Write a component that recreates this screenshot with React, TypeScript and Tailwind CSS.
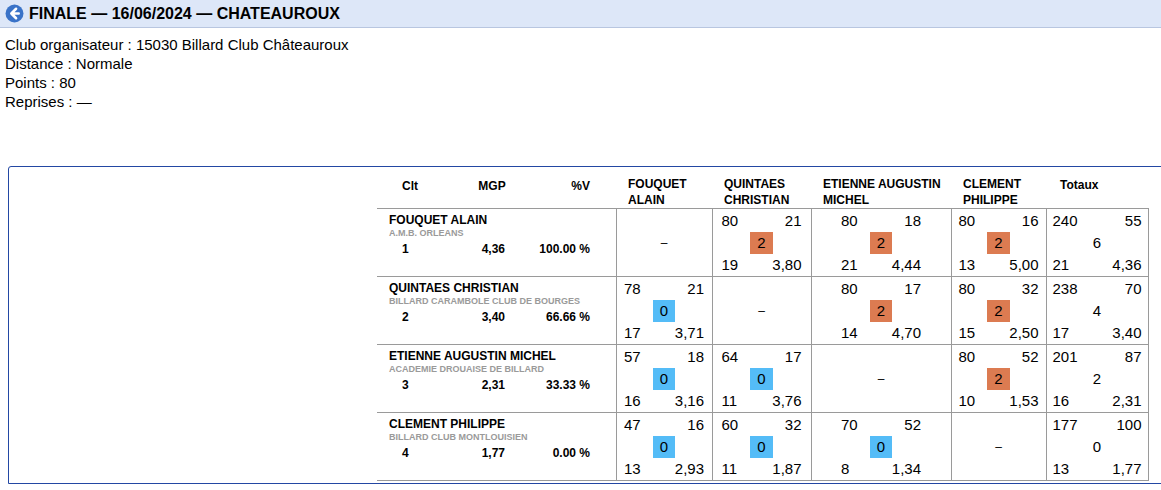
import React from "react";

type Cell = null | { p: number; r: number; m: number; s: number; mo: string; win: boolean };

const players = [
  { name: "FOUQUET ALAIN", club: "A.M.B. ORLEANS", clt: 1, mgp: "4,36", pv: "100.00 %", tot: [240, 55, 6, 21, "4,36"] },
  { name: "QUINTAES CHRISTIAN", club: "BILLARD CARAMBOLE CLUB DE BOURGES", clt: 2, mgp: "3,40", pv: "66.66 %", tot: [238, 70, 4, 17, "3,40"] },
  { name: "ETIENNE AUGUSTIN MICHEL", club: "ACADEMIE DROUAISE DE BILLARD", clt: 3, mgp: "2,31", pv: "33.33 %", tot: [201, 87, 2, 16, "2,31"] },
  { name: "CLEMENT PHILIPPE", club: "BILLARD CLUB MONTLOUISIEN", clt: 4, mgp: "1,77", pv: "0.00 %", tot: [177, 100, 0, 13, "1,77"] },
];

const W = (p: number, r: number, s: number, mo: string) => ({ p, r, m: 2, s, mo, win: true });
const L = (p: number, r: number, s: number, mo: string) => ({ p, r, m: 0, s, mo, win: false });

const grid: Cell[][] = [
  [null, W(80, 21, 19, "3,80"), W(80, 18, 21, "4,44"), W(80, 16, 13, "5,00")],
  [L(78, 21, 17, "3,71"), null, W(80, 17, 14, "4,70"), W(80, 32, 15, "2,50")],
  [L(57, 18, 16, "3,16"), L(64, 17, 11, "3,76"), null, W(80, 52, 10, "1,53")],
  [L(47, 16, 13, "2,93"), L(60, 32, 11, "1,87"), L(70, 52, 8, "1,34"), null],
];

const colW = ["w-[96px]", "w-[99px]", "w-[140px]", "w-[95px]"];
const heads = [["FOUQUET", "ALAIN"], ["QUINTAES", "CHRISTIAN"], ["ETIENNE AUGUSTIN", "MICHEL"], ["CLEMENT", "PHILIPPE"]];

function Match({ c }: { c: Cell }) {
  if (!c) return <div className="text-center">–</div>;
  return (
    <div className="w-[80px] mx-auto text-[15px] leading-[22px]">
      <div className="flex justify-between"><span>{c.p}</span><span>{c.r}</span></div>
      <div className="flex justify-center">
        <span className={`px-[7px] leading-[22px] ${c.win ? "bg-[#dc7b51]" : "bg-[#54bcf7]"}`}>{c.m}</span>
      </div>
      <div className="flex justify-between"><span>{c.s}</span><span>{c.mo}</span></div>
    </div>
  );
}

export default function App() {
  return (
    <div className="w-[1161px] h-[490px] overflow-hidden bg-white text-black" style={{ fontFamily: "'Liberation Sans', Arial, sans-serif" }}>
      <div className="h-[28px] bg-[#dde7f8] border-b border-[#b8c6e0] flex items-center gap-[5px] px-[5px]">
        <svg width="19" height="19" viewBox="0 0 18 18">
          <circle cx="9" cy="9" r="8.5" fill="#3a73c8" />
          <path d="M10.5 4.5 6 9l4.5 4.5M6.5 9H13" stroke="#fff" strokeWidth="2.4" fill="none" strokeLinecap="round" strokeLinejoin="round" />
        </svg>
        <span className="font-bold text-[16px]">FINALE — 16/06/2024 — CHATEAUROUX</span>
      </div>
      <div className="px-[5px] pt-[7px] text-[15px] leading-[19px]">
        <div>Club organisateur : 15030 Billard Club Châteauroux</div>
        <div>Distance : Normale</div>
        <div>Points : 80</div>
        <div>Reprises : —</div>
      </div>
      <div className="ml-[8px] mt-[55px] w-[1170px] h-[318px] border border-[#2347a3] rounded-tl-[3px] pt-[6px] pl-[368px]">
        <table className="border-collapse text-[12px]">
          <thead>
            <tr className="h-[35px] align-top font-bold">
              <th className="w-[239px] p-0 font-bold">
                <div className="grid grid-cols-[60px_110px_43px] pt-[4px] text-[12px]">
                  <span className="text-left pl-[25px]">Clt</span>
                  <span className="text-center">MGP</span>
                  <span className="text-right">%V</span>
                </div>
              </th>
              {heads.map((h, i) => (
                <th key={i} className={`${colW[i]} text-left font-bold pl-[12px] pt-[3px] leading-[16px]`}>
                  {h[0]}<br />{h[1]}
                </th>
              ))}
              <th className="w-[102px] text-left font-bold pl-[14px] pt-[3px]">Totaux</th>
            </tr>
          </thead>
          <tbody>
            {players.map((p, i) => (
              <tr key={i} className="h-[68px] border-t border-b border-[#9a9a9a]">
                <td className="align-top pl-[12px] pt-[3px]">
                  <div className="font-bold text-[12px] leading-[16px]">{p.name}</div>
                  <div className="font-bold text-[9px] text-[#9a9a9a] leading-[11px]">{p.club}</div>
                  <div className="grid grid-cols-[44px_72px_85px] font-bold text-[12px] leading-[20px]">
                    <span className="pl-[13px]">{p.clt}</span>
                    <span className="text-right">{p.mgp}</span>
                    <span className="text-right">{p.pv}</span>
                  </div>
                </td>
                {grid[i].map((c, j) => (
                  <td key={j} className="border-l border-r border-[#9a9a9a] p-0 align-middle">
                    <Match c={c} />
                  </td>
                ))}
                <td className="border-l border-r border-[#9a9a9a] px-[6px] text-[15px] leading-[22px]">
                  <div className="flex justify-between"><span>{p.tot[0]}</span><span>{p.tot[1]}</span></div>
                  <div className="text-center">{p.tot[2]}</div>
                  <div className="flex justify-between"><span>{p.tot[3]}</span><span>{p.tot[4]}</span></div>
                </td>
              </tr>
            ))}
          </tbody>
        </table>
      </div>
    </div>
  );
}
